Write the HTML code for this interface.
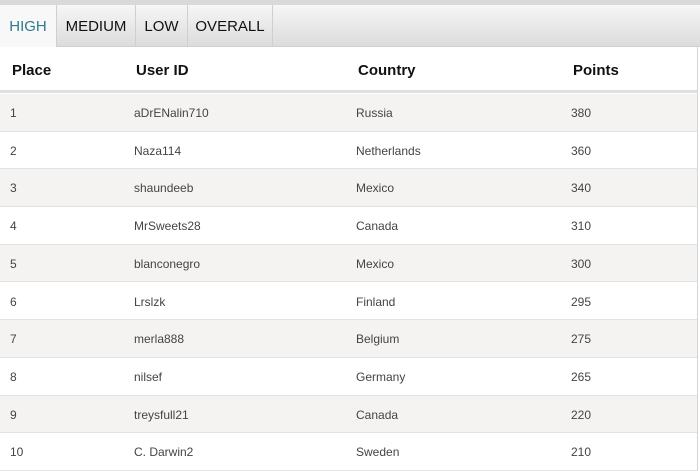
<!DOCTYPE html>
<html><head><style>
*{margin:0;padding:0;box-sizing:border-box}
body{width:700px;height:470px;overflow:hidden;background:#fff;font-family:"Liberation Sans",sans-serif;position:relative}
.top{position:absolute;left:0;top:0;width:700px;height:5px;background:#d9d9d9}
.tabs{position:absolute;left:0;top:5px;width:700px;height:42px;background:linear-gradient(#f6f6f6,#dcdcdc);border-bottom:1px solid #d0d0d0}
.tab{position:absolute;top:0;height:42px;line-height:44px;font-size:15px;color:#111;text-align:center;border-right:1px solid #cfcfcf}
.tab.a{background:#f8f8f8;color:#2c7b8c}
.hdr{position:absolute;left:0;top:47px;width:698px;height:46px;background:#fff;border-bottom:3px solid #e0e0e0}
.hdr span{position:absolute;top:15px;font-size:15px;font-weight:bold;color:#111}
.row{position:absolute;left:0;width:698px;height:37.7px;border-bottom:1px solid #e2e2e2;font-size:12px;color:#444}
.row span{position:absolute;top:12px}
.odd{background:#f4f3f1}
.rb{position:absolute;left:697px;top:47px;width:1px;height:423px;background:#d5d5d5}
</style></head><body>
<div class="top"></div>
<div class="tabs">
<div class="tab a" style="left:0;width:57px">HIGH</div>
<div class="tab" style="left:57px;width:79px">MEDIUM</div>
<div class="tab" style="left:136px;width:52px">LOW</div>
<div class="tab" style="left:188px;width:85px">OVERALL</div>
</div>
<div class="hdr"><span style="left:12px">Place</span><span style="left:136px">User ID</span><span style="left:358px">Country</span><span style="left:573px">Points</span></div>
<div class="row odd" style="top:94px"><span style="left:10px">1</span><span style="left:134px">aDrENalin710</span><span style="left:356px">Russia</span><span style="left:571px">380</span></div>
<div class="row" style="top:131.7px"><span style="left:10px">2</span><span style="left:134px">Naza114</span><span style="left:356px">Netherlands</span><span style="left:571px">360</span></div>
<div class="row odd" style="top:169.4px"><span style="left:10px">3</span><span style="left:134px">shaundeeb</span><span style="left:356px">Mexico</span><span style="left:571px">340</span></div>
<div class="row" style="top:207.1px"><span style="left:10px">4</span><span style="left:134px">MrSweets28</span><span style="left:356px">Canada</span><span style="left:571px">310</span></div>
<div class="row odd" style="top:244.8px"><span style="left:10px">5</span><span style="left:134px">blanconegro</span><span style="left:356px">Mexico</span><span style="left:571px">300</span></div>
<div class="row" style="top:282.5px"><span style="left:10px">6</span><span style="left:134px">Lrslzk</span><span style="left:356px">Finland</span><span style="left:571px">295</span></div>
<div class="row odd" style="top:320.2px"><span style="left:10px">7</span><span style="left:134px">merla888</span><span style="left:356px">Belgium</span><span style="left:571px">275</span></div>
<div class="row" style="top:357.9px"><span style="left:10px">8</span><span style="left:134px">nilsef</span><span style="left:356px">Germany</span><span style="left:571px">265</span></div>
<div class="row odd" style="top:395.6px"><span style="left:10px">9</span><span style="left:134px">treysfull21</span><span style="left:356px">Canada</span><span style="left:571px">220</span></div>
<div class="row" style="top:433.3px"><span style="left:10px">10</span><span style="left:134px">C. Darwin2</span><span style="left:356px">Sweden</span><span style="left:571px">210</span></div>
<div class="rb"></div>
</body></html>
